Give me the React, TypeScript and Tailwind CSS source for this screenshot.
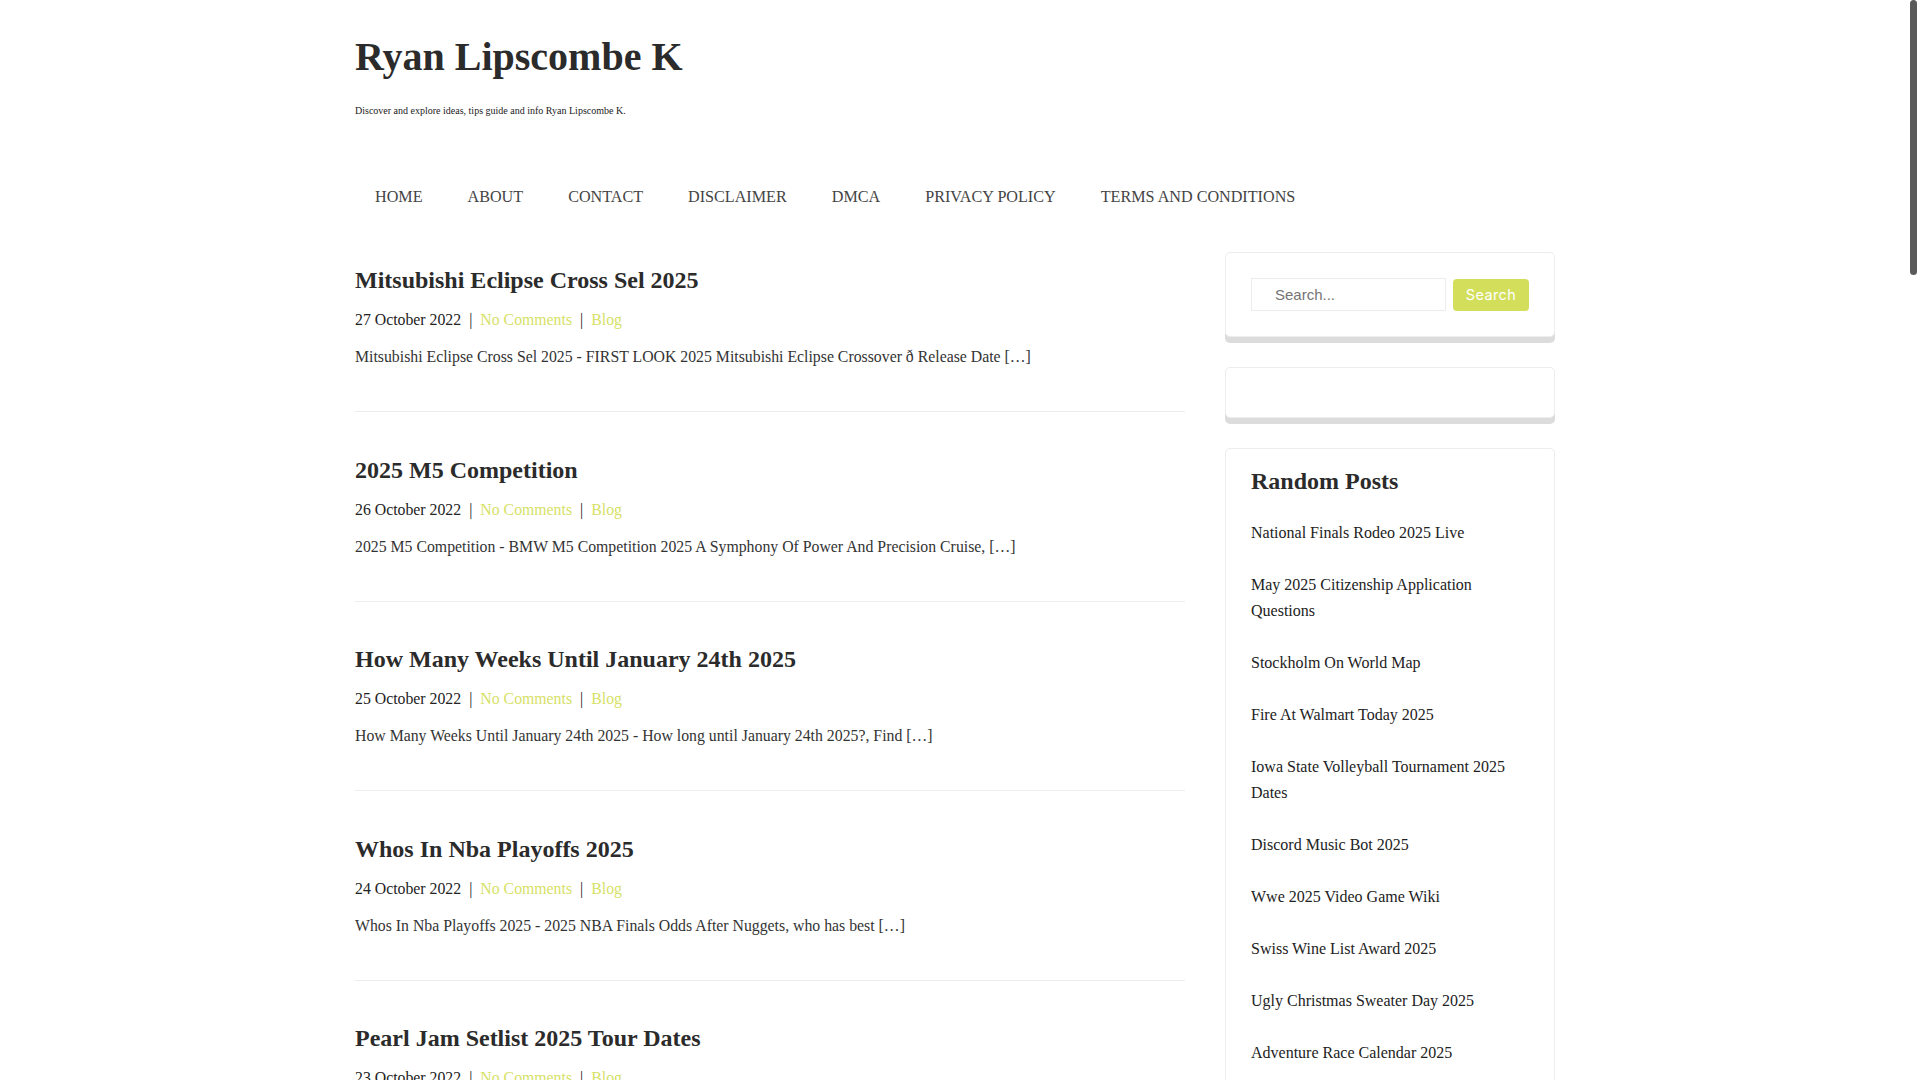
const NAV = ['HOME', 'ABOUT', 'CONTACT', 'DISCLAIMER', 'DMCA', 'PRIVACY POLICY', 'TERMS AND CONDITIONS']

const POSTS = [
    {
        title: 'Mitsubishi Eclipse Cross Sel 2025',
        date: '27 October 2022',
        excerpt:
            'Mitsubishi Eclipse Cross Sel 2025 - FIRST LOOK 2025 Mitsubishi Eclipse Crossover ð Release Date […]',
    },
    {
        title: '2025 M5 Competition',
        date: '26 October 2022',
        excerpt: '2025 M5 Competition - BMW M5 Competition 2025 A Symphony Of Power And Precision Cruise, […]',
    },
    {
        title: 'How Many Weeks Until January 24th 2025',
        date: '25 October 2022',
        excerpt: 'How Many Weeks Until January 24th 2025 - How long until January 24th 2025?, Find […]',
    },
    {
        title: 'Whos In Nba Playoffs 2025',
        date: '24 October 2022',
        excerpt: 'Whos In Nba Playoffs 2025 - 2025 NBA Finals Odds After Nuggets, who has best […]',
    },
    {
        title: 'Pearl Jam Setlist 2025 Tour Dates',
        date: '23 October 2022',
        excerpt: 'Pearl Jam Setlist 2025 Tour Dates - Pearl Jam 2025 Tour Dates And Setlist, […]',
    },
]

const RANDOM = [
    'National Finals Rodeo 2025 Live',
    'May 2025 Citizenship Application Questions',
    'Stockholm On World Map',
    'Fire At Walmart Today 2025',
    'Iowa State Volleyball Tournament 2025 Dates',
    'Discord Music Bot 2025',
    'Wwe 2025 Video Game Wiki',
    'Swiss Wine List Award 2025',
    'Ugly Christmas Sweater Day 2025',
    'Adventure Race Calendar 2025',
    'Best Hybrid Suv 2025',
]

function PostItem({ title, date, excerpt }: { title: string; date: string; excerpt: string }) {
    return (
        <article className="mb-[42.5px] border-b border-[#ececf1] pb-[42px]">
            <h2 className="text-[24px] font-bold leading-[30px] text-[#2b2b2b]">{title}</h2>
            <div className="mt-[13px] text-[15.8px] leading-[24px] text-[#222]">
                {date}
                <span className="mx-[8px]">|</span>
                <a className="text-[#d6e166]">No Comments</a>
                <span className="mx-[8px]">|</span>
                <a className="text-[#d6e166]">Blog</a>
            </div>
            <p className="mt-[13px] text-[15.8px] leading-[24px] text-[#333]">{excerpt}</p>
        </article>
    )
}

function Widget({ children, className = '' }: { children?: React.ReactNode; className?: string }) {
    return (
        <div
            className={`rounded-[5px] border border-[#ececf1] bg-white shadow-[0_6px_0_0_#dcdcdc] ${className}`}
        >
            {children}
        </div>
    )
}

export default function App() {
    return (
        <div
            className="relative h-screen overflow-hidden bg-white"
            style={{ fontFamily: '"Liberation Serif", "Times New Roman", serif' }}
        >
            <div className="ml-[355px] w-[1200px]">
                {/* Header */}
                <header className="pt-[33px]">
                    <h1 className="text-[40px] font-bold leading-[48px] text-[#2b2b2b]">Ryan Lipscombe K</h1>
                    <p className="mt-[22px] text-[10px] leading-[16px] text-[#222]">
                        Discover and explore ideas, tips guide and info Ryan Lipscombe K.
                    </p>
                    <nav className="mt-[66px] flex gap-[5px]">
                        {NAV.map((item) => (
                            <a key={item} className="px-[20px] text-[16.15px] leading-[24px] text-[#444]">
                                {item}
                            </a>
                        ))}
                    </nav>
                </header>

                <div className="mt-[43px] flex gap-[40px]">
                    {/* Posts */}
                    <main className="w-[830px] pt-[13px]">
                        {POSTS.map((p) => (
                            <PostItem key={p.title} {...p} />
                        ))}
                    </main>

                    {/* Sidebar */}
                    <aside className="flex w-[330px] flex-col gap-[30px]">
                        <Widget className="p-[25px]">
                            <form className="flex items-center gap-[7px]" onSubmit={(e) => e.preventDefault()}>
                                <input
                                    placeholder="Search..."
                                    className="h-[33px] w-[195px] border border-[#ececec] pl-[23px] text-[15px] text-[#555] outline-none placeholder:text-[#757575]"
                                    style={{ fontFamily: '"Liberation Sans", Arial, sans-serif' }}
                                />
                                <button
                                    type="submit"
                                    className="h-[32px] w-[76px] rounded-[4px] bg-[#d3de5a] text-[14.5px] tracking-[0.4px] text-white"
                                    style={{ fontFamily: 'Inter, "Noto Sans", sans-serif' }}
                                >
                                    Search
                                </button>
                            </form>
                        </Widget>

                        <Widget className="h-[51px]" />

                        <Widget className="px-[25px] pt-[17px]">
                            <h3 className="text-[24px] font-bold leading-[30px] text-[#2b2b2b]">Random Posts</h3>
                            <ul className="mt-[24px]">
                                {RANDOM.map((r) => (
                                    <li key={r} className="pb-[26px] text-[16px] leading-[26px] text-[#222]">
                                        {r}
                                    </li>
                                ))}
                            </ul>
                        </Widget>
                    </aside>
                </div>
            </div>

            {/* overlay scrollbar thumb */}
            <div className="pointer-events-none absolute right-[3px] top-0 h-[275px] w-[7px] rounded-full bg-[#5a5a5a]" />
        </div>
    )
}
